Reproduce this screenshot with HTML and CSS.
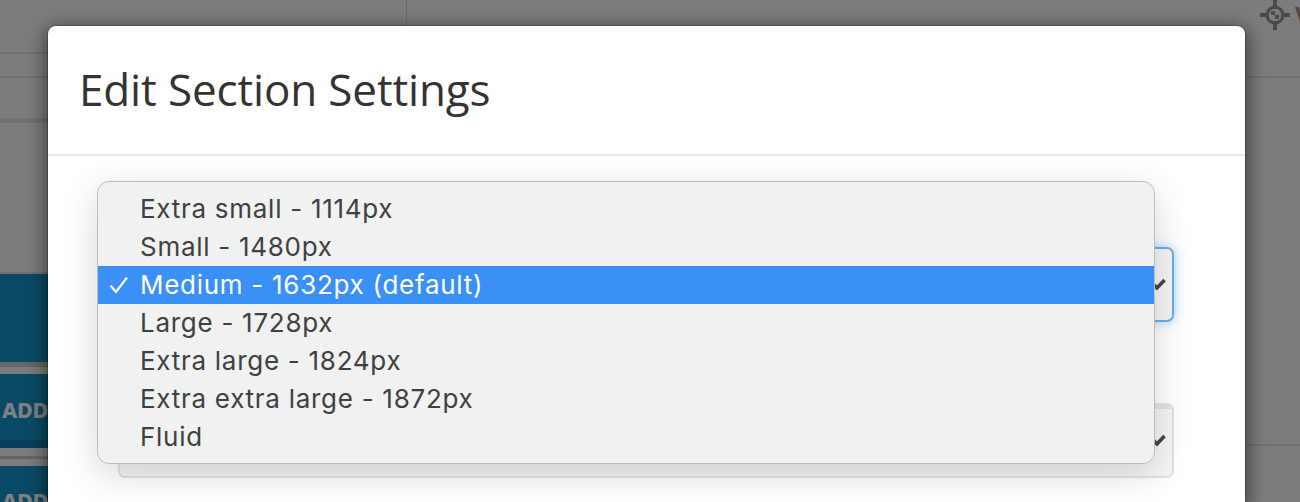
FILE: index.html
```html
<!DOCTYPE html>
<html lang="en">
<head>
<meta charset="utf-8">
<title>Edit Section Settings</title>
<link rel="stylesheet" href="styles.css">
</head>
<body>
<div class="backdrop">
  <div class="bg-vline"></div>
  <div class="bg-line bg-l1"></div>
  <div class="bg-line bg-l2"></div>
  <div class="bg-line bg-l3"></div>
  <div class="bg-line bg-l4"></div>
  <div class="bg-line bg-r1"></div>
  <div class="bg-line bg-r2"></div>
  <div class="bg-band bg-g1"></div>
  <div class="bg-band bg-g2"></div>
  <div class="bg-block bg-b1"></div>
  <div class="bg-block bg-b2"><span>ADD</span></div>
  <div class="bg-block bg-b3"><span>ADD</span></div>
  <div class="bg-move">
    <svg width="30" height="30" viewBox="0 0 30 30"><circle cx="15" cy="15" r="8" fill="none" stroke="#4a4a4a" stroke-width="3"/><path d="M13 0h4v9h-4zM13 21h4v9h-4zM0 13h9v4H0zM21 13h9v4h-9z" fill="#4a4a4a"/><path d="M11 11h4v4h-4zM15 15h4v4h-4z" fill="#4a4a4a"/></svg>
    <span>V</span>
  </div>
</div>
<main class="modal">
  <header class="modal-header"><h1>Edit Section Settings</h1></header>
  <section class="modal-body">
    <div class="select select-focus"><svg class="chk" width="14" height="13" viewBox="0 0 14 13"><path d="M1.5 6.5l3.5 3.5L12.5 2" fill="none" stroke="#444" stroke-width="3.6"/></svg></div>
    <div class="select select-plain"><svg class="chk" width="14" height="13" viewBox="0 0 14 13"><path d="M1.5 6.5l3.5 3.5L12.5 2" fill="none" stroke="#444" stroke-width="3.6"/></svg></div>
    <ul class="menu">
      <li>Extra small - 1114px</li>
      <li>Small - 1480px</li>
      <li class="selected"><svg class="tick" width="20" height="18" viewBox="0 0 20 18"><path d="M1.5 9.5l5.5 6.5L18 1.5" fill="none" stroke="#fff" stroke-width="2.2"/></svg>Medium - 1632px (default)</li>
      <li>Large - 1728px</li>
      <li>Extra large - 1824px</li>
      <li>Extra extra large - 1872px</li>
      <li>Fluid</li>
    </ul>
  </section>
</main>
</body>
</html>
```
FILE: styles.css
```css
html, body { margin: 0; height: 100%; overflow: hidden; }
body { background: #7a7a7a; font-family: "Inter", "Liberation Sans", sans-serif; position: relative; }
.backdrop { position: absolute; inset: 0; background: #7c7c7c; }
.bg-vline { position: absolute; left: 406px; top: 0; width: 1px; height: 26px; background: #6c6c6c; }
.bg-line { position: absolute; height: 2px; background: #707070; }
.bg-l1 { left: 0; width: 48px; top: 52px; }
.bg-l2 { left: 0; width: 48px; top: 76px; }
.bg-l3 { left: 0; width: 48px; top: 118px; height: 5px; }
.bg-l4 { left: 0; width: 48px; top: 272px; }
.bg-r1 { left: 1245px; right: 0; top: 76px; }
.bg-r2 { left: 1245px; right: 0; top: 444px; }
.bg-band { position: absolute; left: 0; width: 48px; }
.bg-g1 { top: 362px; height: 5px; background: #666; }
.bg-g2 { top: 456px; height: 3px; background: #666; }
.bg-block { position: absolute; left: 0; width: 48px; background: #0a4a64; color: #7f8080; font: 800 21.5px "Noto Sans", sans-serif; letter-spacing: -.3px; overflow: hidden; white-space: nowrap; }
.bg-b1 { top: 274px; height: 88px; }
.bg-b2 { top: 374px; height: 74px; padding-top: 4px; border-bottom: 8px solid #08405a; box-sizing: border-box; display: flex; align-items: center; }
.bg-b3 { top: 466px; height: 36px; }
.bg-b2 span, .bg-b3 span { margin-left: 2px; }
.bg-b3 span { display: block; margin-top: 20px; }
.bg-move { position: absolute; left: 1260px; top: 0; display: flex; gap: 5px; align-items: center; color: #4f4a44; font: 700 24px "Noto Sans", sans-serif; height: 29px; }
.modal { position: absolute; left: 48px; top: 26px; right: 55px; bottom: 0; background: #fff; border-radius: 8px 8px 0 0; box-shadow: 0 0 0 1px rgba(0,0,0,.2), 0 5px 18px 3px rgba(0,0,0,.5); }
.modal-header { height: 130px; box-sizing: border-box; border-bottom: 2px solid #e7e7e7; padding: 0 31px 2px; display: flex; align-items: center; }
.modal-header h1 { margin: 0; font: 400 44px "Open Sans", sans-serif; letter-spacing: -.14px; color: #333; }
.modal-body { position: relative; }
.select { position: absolute; left: 70px; width: 1056px; height: 75px; box-sizing: border-box; border-radius: 7px; background: #f5f5f5; }
.select-focus { top: 91px; border: 2px solid #66afe9; box-shadow: 0 0 12px rgba(102,175,233,.6); }
.select-plain { top: 247px; border: 2px solid #e2e2e2; border-top-width: 6px; }
.chk { position: absolute; right: 6px; top: 29px; }
.select-plain .chk { top: 25px; }
.menu { position: absolute; left: 49px; top: 25px; width: 1058px; margin: 0; padding: 8px 0 7px; list-style: none; box-sizing: border-box; background: #f0f1f1; border: 1px solid #bdbdbd; border-radius: 12px; box-shadow: 0 10px 36px rgba(0,0,0,.16); font-size: 26px; letter-spacing: .72px; color: #404040; }
.menu li { height: 38px; line-height: 38px; padding-left: 42px; position: relative; white-space: nowrap; }
.menu .selected { background: #3b90f7; color: #fff; }
.tick { position: absolute; left: 11px; top: 10px; }
```
